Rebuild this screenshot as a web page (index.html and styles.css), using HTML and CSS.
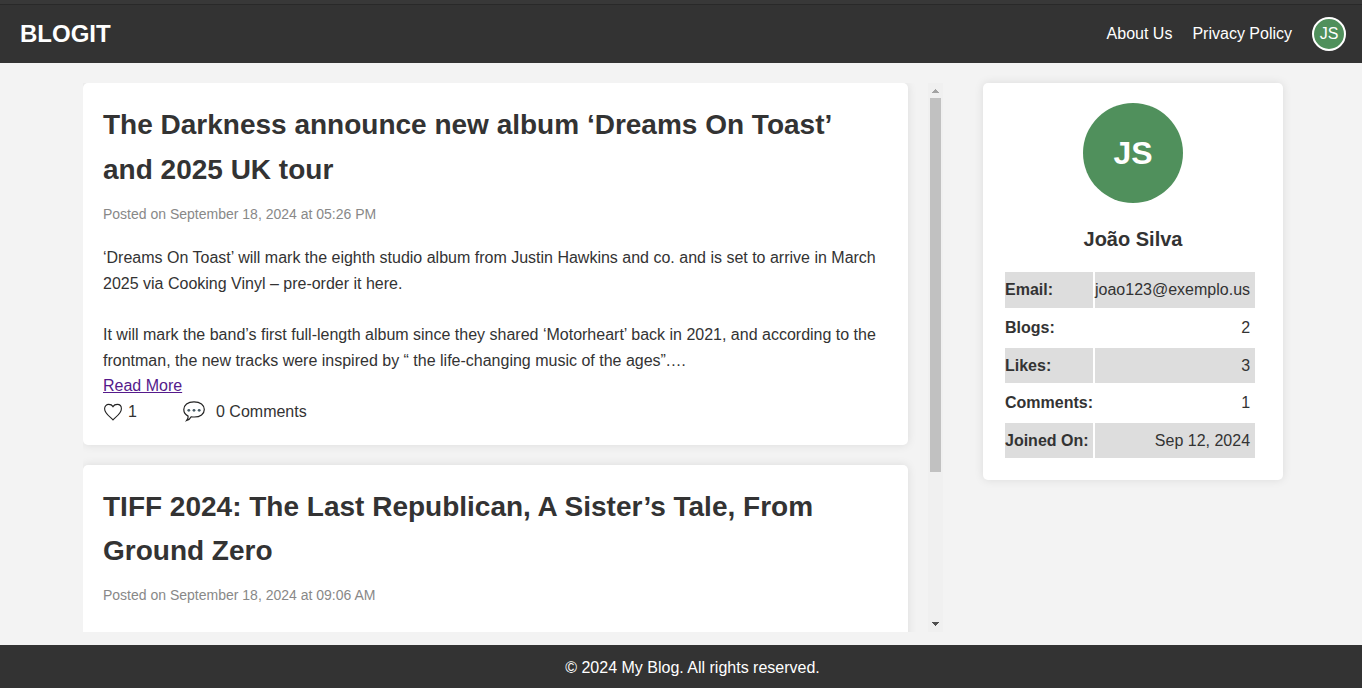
FILE: index.html
```html
<!DOCTYPE html>
<html lang="en">
<head>
<meta charset="utf-8">
<title>Blogit</title>
<link rel="stylesheet" href="styles.css">
</head>
<body>
<header class="header">
  <div class="logo">BLOGIT</div>
  <nav class="nav">
    <a class="nav-link">About Us</a>
    <a class="nav-link">Privacy Policy</a>
    <div class="avatar-small">JS</div>
  </nav>
</header>
<main class="main">
  <div class="feed">
    <div class="posts">
      <article class="card post">
        <h2 class="post-title">The Darkness announce new album ‘Dreams On Toast’ and 2025 UK tour</h2>
        <p class="post-date">Posted on September 18, 2024 at 05:26 PM</p>
        <div class="post-body">‘Dreams On Toast’ will mark the eighth studio album from Justin Hawkins and co. and is set to arrive in March 2025 via Cooking Vinyl – pre-order it here.<br><br>It will mark the band’s first full-length album since they shared ‘Motorheart’ back in 2021, and according to the frontman, the new tracks were inspired by “ the life-changing music of the ages”.…</div>
        <a class="read-more" href="#">Read More</a>
        <div class="reactions">
          <svg class="heart" width="20" height="20" viewBox="0 0 20 20"><path d="M10 17.8C7.6 15 1.6 11.7 1.6 6.7C1.6 4 3.5 2.4 5.7 2.4C7.9 2.4 9.3 3.4 10 4.6C10.7 3.4 12.1 2.4 14.3 2.4C16.5 2.4 18.4 4 18.4 6.7C18.4 11.7 12.4 15 10 17.8Z"/></svg>
          <span class="likes">1</span>
          <svg class="bubble" width="24" height="22" viewBox="0 0 24 22"><path d="M6.1 16.1C3.4 14.8 1.8 12.4 1.8 9.6C1.8 5 5.7 1.8 12 1.8S22.3 5 22.3 9.5S18.3 17 12.3 17C11.2 17 10.2 16.9 9.2 16.8C8.2 18.8 6.8 19.9 4.7 20.5C6 19 6.3 17.7 6.1 16.1Z"/><g class="dots"><circle cx="6.8" cy="10.3" r="1.4"/><circle cx="12" cy="10.3" r="1.4"/><circle cx="17.2" cy="10.3" r="1.4"/></g></svg>
          <span>0 Comments</span>
        </div>
      </article>
      <article class="card post">
        <h2 class="post-title">TIFF 2024: The Last Republican, A Sister’s Tale, From Ground Zero</h2>
        <p class="post-date">Posted on September 18, 2024 at 09:06 AM</p>
        <div class="post-body"><br><br></div>
      </article>
    </div>
    <div class="scrollbar">
      <svg class="arrow-up" width="15" height="15" viewBox="0 0 15 15" shape-rendering="crispEdges"><path d="M4 10h7v-1h-1v-1h-1v-1h-1v-1h-1v1h-1v1h-1v1h-1z"/></svg>
      <div class="thumb"></div>
      <svg class="arrow-down" width="15" height="15" viewBox="0 0 15 15" shape-rendering="crispEdges"><path d="M4 5h7v1h-1v1h-1v1h-1v1h-1v-1h-1v-1h-1v-1h-1z"/></svg>
    </div>
  </div>
  <aside class="card profile">
    <div class="avatar-large">JS</div>
    <h3 class="name">João Silva</h3>
    <table class="stats">
      <tr><th>Email:</th><td>joao123@exemplo.us</td></tr>
      <tr><th>Blogs:</th><td>2</td></tr>
      <tr><th>Likes:</th><td>3</td></tr>
      <tr><th>Comments:</th><td>1</td></tr>
      <tr><th>Joined On:</th><td>Sep 12, 2024</td></tr>
    </table>
  </aside>
</main>
<footer class="footer">© 2024 My Blog. All rights reserved.</footer>
</body>
</html>
```
FILE: styles.css
```css
* { box-sizing: border-box; margin: 0; padding: 0; }
body {
  height: 688px;
  display: flex;
  flex-direction: column;
  overflow: hidden;
  background: #f3f3f3;
  color: #333;
  font: 16px/1.6 "Liberation Sans", Arial, sans-serif;
}
.header {
  height: 63px;
  flex: none;
  display: flex;
  align-items: center;
  justify-content: space-between;
  padding: 4px 16px 0 20px;
  background: linear-gradient(#383838 4px, #292929 4px, #292929 5px, #333 5px);
  color: #fff;
}
.logo { padding-top: 1px; font-size: 24px; font-weight: bold; }
.nav { display: flex; align-items: center; gap: 20px; }
.avatar-small {
  width: 34px;
  height: 34px;
  border: 2px solid #fff;
  border-radius: 50%;
  background: #50905c;
  line-height: 30px;
  text-align: center;
}
.main {
  flex: 1;
  min-height: 0;
  display: flex;
  align-items: flex-start;
  gap: 40px;
  padding: 20px 79px 13px 83px;
}
.feed { width: 860px; height: 549px; display: flex; overflow: hidden; }
.posts { width: 845px; padding-right: 20px; display: flex; flex-direction: column; gap: 20px; }
.card {
  flex: none;
  border-radius: 5px;
  background: #fff;
  box-shadow: 0 0 10px rgba(0, 0, 0, 0.1);
}
.post { padding: 20px; }
.post-title { margin-bottom: 10px; font-size: 28px; }
.post-date { margin-bottom: 20.25px; color: #888; font-size: 14px; }
.read-more { display: block; width: max-content; color: #551a8b; }
.reactions { height: 25.8px; display: flex; align-items: center; }
.heart { fill: none; stroke: #222; stroke-width: 1.1; }
.likes { width: 59px; padding-left: 5px; }
.bubble { margin: 0 10px 2px 0; fill: none; stroke: #222; stroke-width: 1.2; }
.dots { fill: #455a64; stroke: none; }
.scrollbar {
  width: 15px;
  display: flex;
  flex-direction: column;
  background: #f0f0f0;
}
.thumb { width: 11px; height: 374px; margin-left: 2px; background: #c1c1c1; }
.arrow-up { fill: #a3a3a3; }
.arrow-down { margin-top: auto; fill: #505050; }
.profile { width: 300px; height: 397px; padding: 20px; }
.avatar-large {
  width: 100px;
  height: 100px;
  margin: 0 auto 20px;
  border-radius: 50%;
  background: #50905c;
  color: #fff;
  font-size: 32px;
  font-weight: bold;
  line-height: 100px;
  text-align: center;
}
.name { margin-bottom: 15.4px; font-size: 20px; text-align: center; }
.stats { width: 254px; border-spacing: 2px; }
.stats th { width: 88px; padding: 5px 0; text-align: left; }
.stats td { padding: 5px 5px 5px 0; text-align: right; }
.stats tr:nth-child(odd) > * { background: #ddd; }
.footer {
  height: 43px;
  flex: none;
  padding-left: 23px;
  background: #333;
  color: #fff;
  line-height: 45px;
  text-align: center;
}
```
